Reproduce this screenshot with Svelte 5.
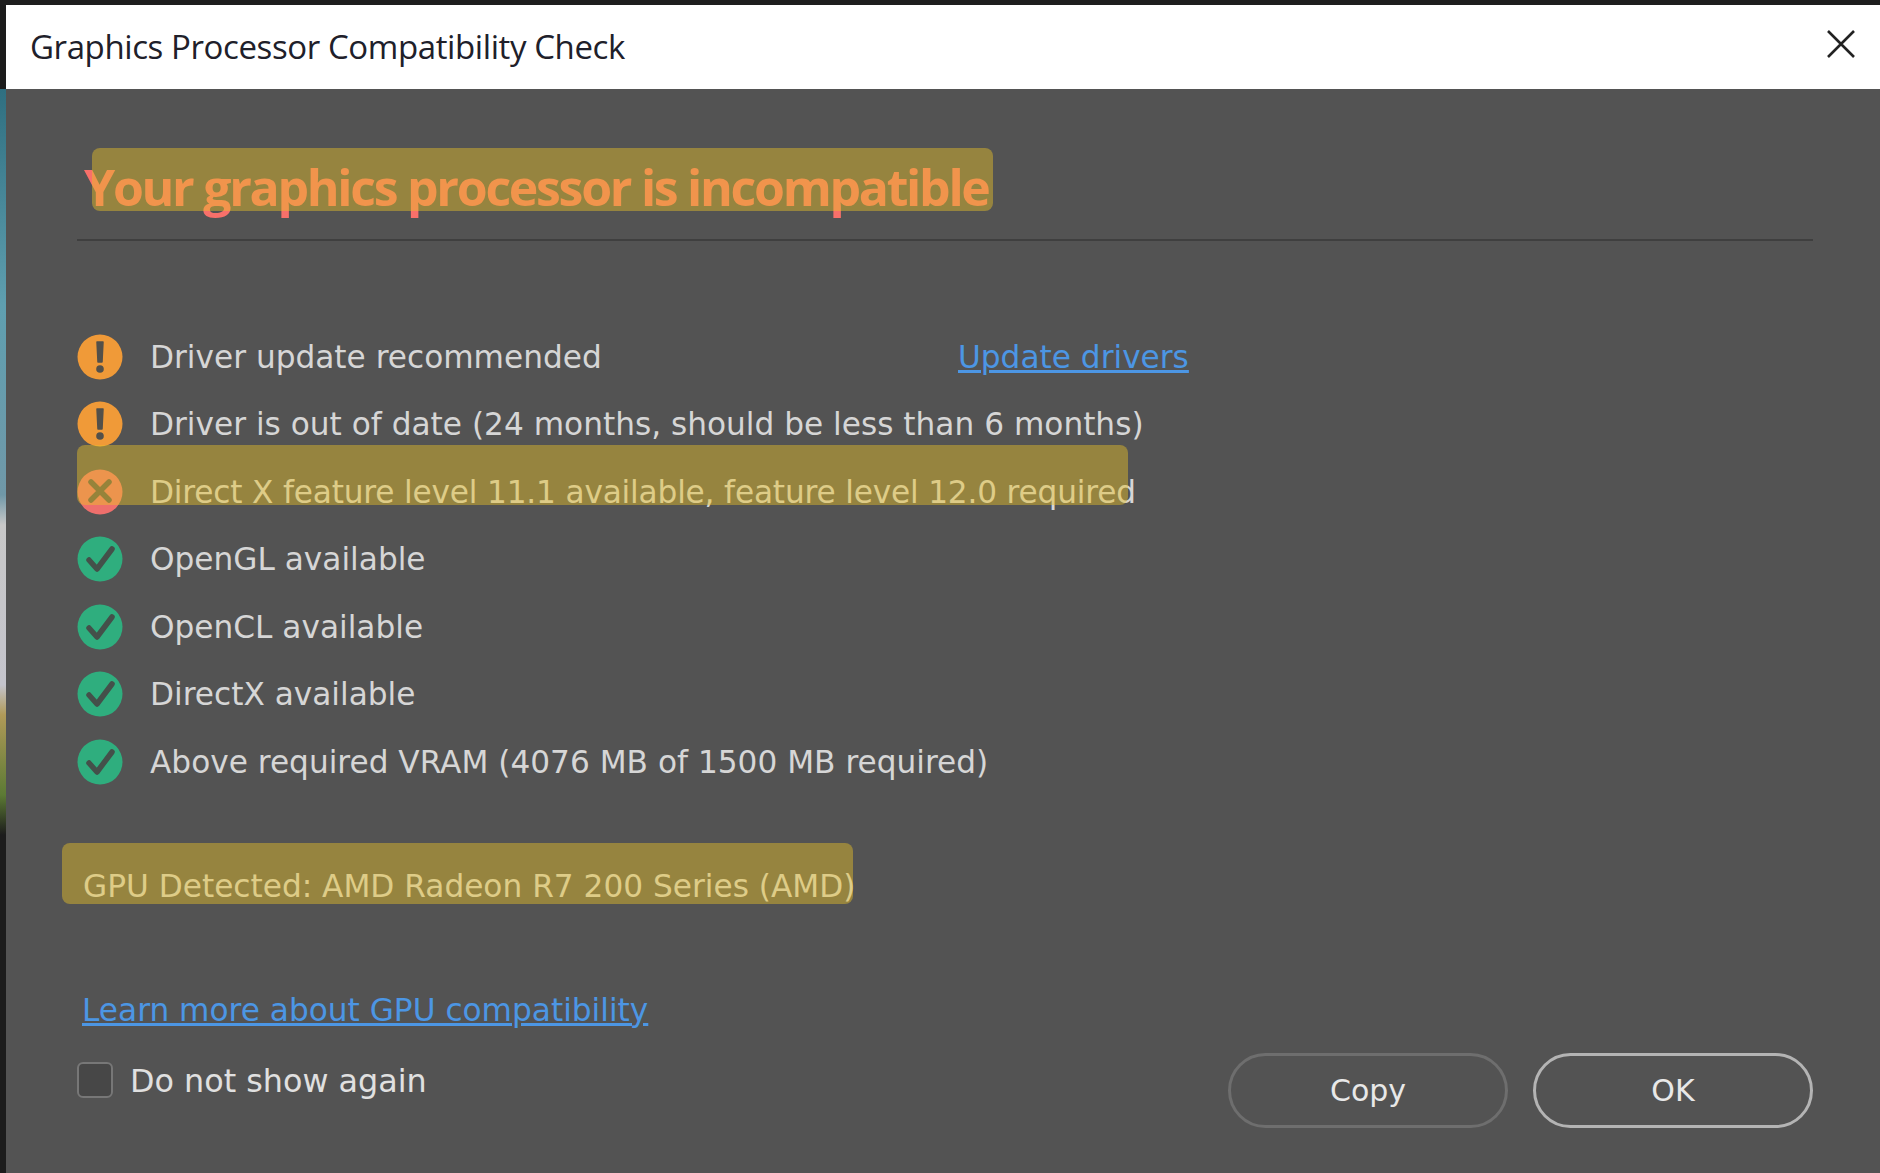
<script>
  const rows = [
    { kind: 'warn', text: 'Driver update recommended', link: 'Update drivers' },
    { kind: 'warn', text: 'Driver is out of date (24 months, should be less than 6 months)' },
    { kind: 'err', text: 'Direct X feature level 11.1 available, feature level 12.0 required', mark: true },
    { kind: 'ok', text: 'OpenGL available' },
    { kind: 'ok', text: 'OpenCL available' },
    { kind: 'ok', text: 'DirectX available' },
    { kind: 'ok', text: 'Above required VRAM (4076 MB of 1500 MB required)' }
  ];
</script>

<div class="screen">
  <div class="topedge"></div>
  <div class="window">
    <div class="strip"></div>
    <div class="dialog">
      <header class="titlebar">
        <span class="wintitle">Graphics Processor Compatibility Check</span>
        <svg class="close" viewBox="0 0 30 30" aria-label="Close"><path d="M2 2 L28 28 M28 2 L2 28" /></svg>
      </header>
      <main class="body">
        <div class="headline">
          <h1>Your graphics processor is incompatible</h1>
          <span class="marker m-title"></span>
        </div>
        <ul class="checks">
          {#each rows as r}
            <li class="row">
              <svg class="icon" viewBox="0 0 46 46">
                {#if r.kind === 'warn'}
                  <circle cx="23" cy="23" r="22.5" fill="#f09a38" />
                  <path d="M20 8 H26 L25 28 H21 Z" fill="#53504a" stroke="#53504a" stroke-width="1.5" stroke-linejoin="round" />
                  <circle cx="23" cy="35" r="3.8" fill="#53504a" />
                {:else if r.kind === 'err'}
                  <circle cx="23" cy="23" r="22.5" fill="#ee6f6c" />
                  <path d="M14 13 L32 31 M32 13 L14 31" stroke="#53504a" stroke-width="5.5" stroke-linecap="round" />
                {:else}
                  <circle cx="23" cy="23" r="22.5" fill="#2fae7e" />
                  <path d="M12 24 L20 33 L35 13" fill="none" stroke="#44504a" stroke-width="5.5" stroke-linecap="round" stroke-linejoin="round" />
                {/if}
              </svg>
              <span class="label" class:tight={r.mark}>{r.text}</span>
              {#if r.link}<a class="link update" href="#drivers">{r.link}</a>{/if}
              {#if r.mark}<span class="marker m-row"></span>{/if}
            </li>
          {/each}
        </ul>
        <div class="gpu">
          <span>GPU Detected: AMD Radeon R7 200 Series (AMD)</span>
          <span class="marker m-gpu"></span>
        </div>
        <div class="footer">
          <div class="footleft">
            <a class="link learn" href="#learn">Learn more about GPU compatibility</a>
            <label class="again"><span class="box"></span><span>Do not show again</span></label>
          </div>
          <div class="buttons">
            <button class="btn copy">Copy</button>
            <button class="btn okb">OK</button>
          </div>
        </div>
      </main>
    </div>
  </div>
</div>

<style>
  :global(body) { margin: 0; background: #1c1c1c; }
  .screen {
    width: 1880px; height: 1173px; overflow: hidden;
    display: flex; flex-direction: column;
    font-family: "DejaVu Sans", "Noto Sans", sans-serif;
    background: #1c1c1c;
  }
  .topedge { height: 5px; background: #1e1e1e; flex: none; }
  .window { flex: 1; display: flex; min-height: 0; }
  .strip {
    width: 6px; flex: none;
    background: linear-gradient(180deg, #1c1c1c 0, #1c1c1c 84px, #2f6f80 84px, #5f9fb0 300px, #7098a8 490px, #c8c8c8 520px, #c4c4cc 680px, #b09a58 710px, #5c7a34 790px, #1c1c1c 830px);
  }
  .dialog { flex: 1; display: flex; flex-direction: column; min-width: 0; }
  .titlebar {
    height: 84px; flex: none; background: #fff;
    display: flex; align-items: center; justify-content: space-between;
    padding: 0 24px 0 24px; box-sizing: border-box;
  }
  .wintitle {
    font-family: "Open Sans", sans-serif; font-size: 33px; color: #20202a;
    letter-spacing: -0.4px; transform: translateY(-1px);
  }
  .close { width: 30px; height: 30px; transform: translateY(-3px); }
  .close path { stroke: #222; stroke-width: 2.6; fill: none; }

  .body { flex: 1; background: #535353; padding: 0 67px 0 71px; color: #d4d4d4; display: flex; flex-direction: column; }
  .headline { position: relative; height: 152px; border-bottom: 2px solid #3f3f3f; box-sizing: border-box; }
  h1 {
    margin: 0; position: absolute; left: 7px; top: 68px; white-space: nowrap;
    font-family: "Open Sans", sans-serif; font-weight: 700; font-size: 50px; line-height: 60px;
    letter-spacing: -2.3px; color: #f8706a;
  }
  .marker { position: absolute; background: rgba(232,192,40,0.45); border-radius: 8px; pointer-events: none; }
  .m-title { left: 15px; top: 59px; width: 901px; height: 63px; }
  .checks { list-style: none; margin: 93px 0 0; padding: 0; display: flex; flex-direction: column; gap: 22.6px; }
  .row { position: relative; display: flex; align-items: center; height: 45px; }
  .icon { width: 46px; height: 46px; flex: none; }
  .label { margin-left: 27px; font-size: 31.2px; white-space: nowrap; color: #d6d6d6; }
  .label.tight { letter-spacing: -0.18px; }
  .link { color: #4c96e4; text-decoration: underline; text-decoration-thickness: 2.5px; text-underline-offset: 2px; }
  .update { position: absolute; left: 881px; font-size: 31.2px; }
  .m-row { left: 0; top: -24px; width: 1051px; height: 60px; }
  .gpu { position: relative; margin: 79px 0 0 6px; font-size: 31.2px; line-height: 45px; white-space: nowrap; color: #d6d6d6; }
  .m-gpu { left: -21px; top: -21px; width: 791px; height: 61px; }
  .footer { margin-top: 79px; display: flex; justify-content: space-between; align-items: flex-end; }
  .footleft { display: flex; flex-direction: column; }
  .learn { font-size: 31.2px; line-height: 45px; margin-left: 5px; }
  .again { display: flex; align-items: center; margin-top: 29px; font-size: 31.8px; color: #e0e0e0; }
  .box { width: 36px; height: 36px; box-sizing: border-box; border: 2px solid #777; border-radius: 6px; background: #474747; margin-right: 17px; }
  .buttons { display: flex; gap: 25px; margin-bottom: -29px; }
  .btn {
    width: 280px; height: 75px; border-radius: 38px; background: transparent;
    font-family: "DejaVu Sans", sans-serif; font-size: 30px; color: #e8e8e8; padding: 0; box-sizing: border-box;
  }
  .copy { border: 3px solid #6e6e6e; }
  .okb { border: 3px solid #b4b4b4; }
</style>
